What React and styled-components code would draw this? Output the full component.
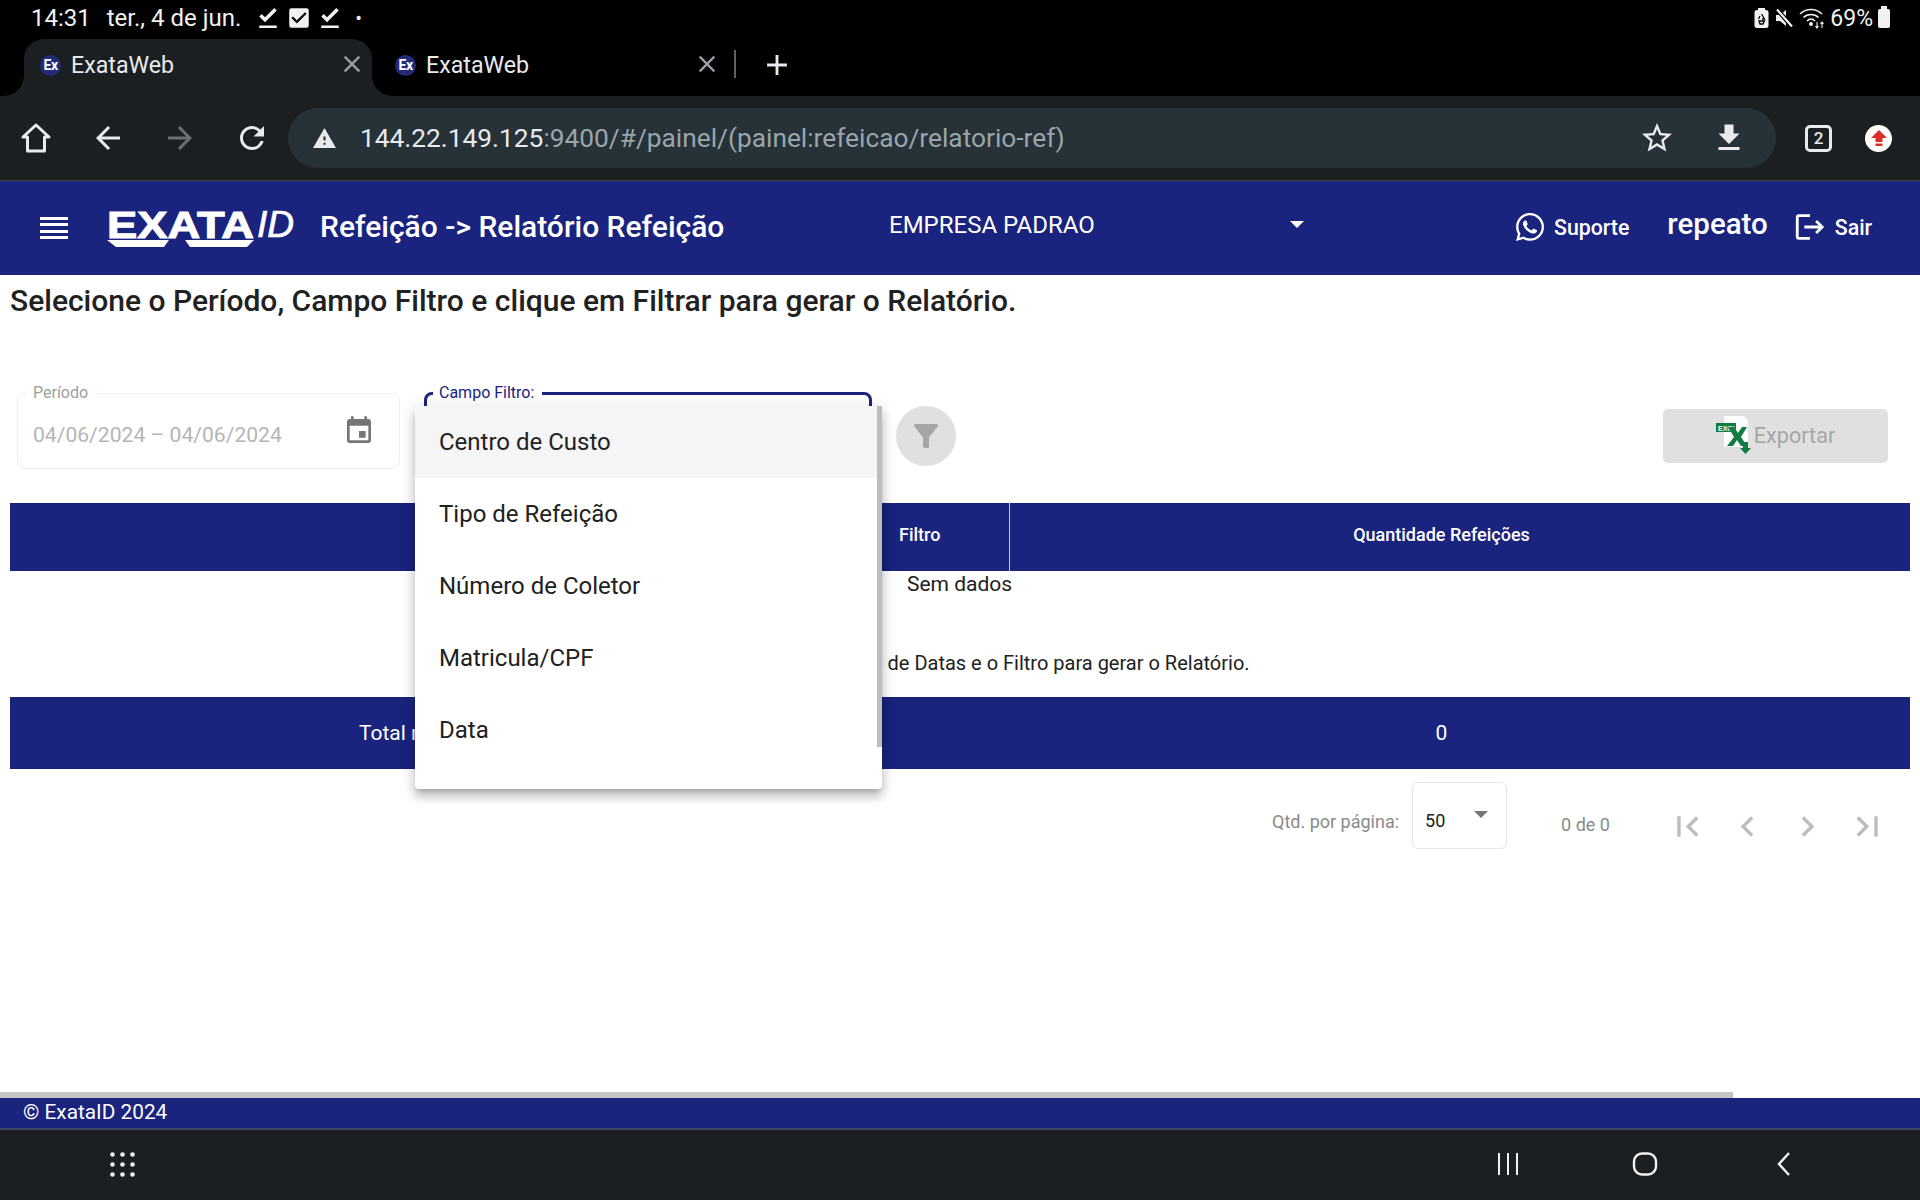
import styled, { createGlobalStyle } from 'styled-components'
import {
  MdFileDownloadDone, MdCheckBox, MdClose, MdAdd, MdArrowBack, MdArrowForward, MdRefresh,
  MdWarning, MdStarBorder, MdFileDownload, MdEvent, MdFilterAlt,
  MdFirstPage, MdChevronLeft, MdChevronRight, MdLastPage, MdLogout,
} from 'react-icons/md'
import { FaWhatsapp } from 'react-icons/fa'

const NAVY = '#1a237e'

const GlobalStyle = createGlobalStyle`
  html, body { margin: 0; padding: 0; background: #fff; overflow: hidden; }
  * { box-sizing: border-box; }
  body { font-family: Roboto, "Noto Sans", sans-serif; }
`

const Screen = styled.div`
  width: 1920px;
  height: 1200px;
  display: flex;
  flex-direction: column;
  overflow: hidden;
`

/* android status bar */
const StatusBar = styled.div`
  height: 39px;
  background: #000;
  color: #f1f1f1;
  display: flex;
  align-items: center;
  padding: 0 31px 3px;
  font-size: 24px;
`
const StatusDate = styled.span`
  margin-left: 16px;
  margin-right: 12px;
`
const CheckBoxGlyph = styled(MdCheckBox)`
  margin: 0 3px;
`
const StatusDot = styled.span`
  margin-left: 10px;
  font-size: 20px;
`
const StatusRight = styled.div`
  margin-left: auto;
  display: flex;
  align-items: center;
  gap: 5px;
  font-size: 23px;
  margin-right: -1px;
`
const BatteryBody = styled.span`
  display: inline-block;
  width: 12px;
  height: 19px;
  background: #f1f1f1;
  border-radius: 2px;
  position: relative;
  &::before {
    content: '';
    position: absolute;
    left: 3px;
    top: -3px;
    width: 6px;
    height: 3px;
    background: #f1f1f1;
  }
`

/* chrome tabs */
const TabStrip = styled.div`
  height: 57px;
  background: #000;
  display: flex;
  align-items: stretch;
  padding-left: 24px;
`
const Tab = styled.div`
  width: ${p => (p.$active ? '348px' : '355px')};
  margin-right: ${p => (p.$active ? '7px' : '0')};
  position: relative;
  display: flex;
  align-items: center;
  padding: 0 0 5px 16px;
  color: #e8eaed;
  font-size: 23.2px;
  background: ${p => (p.$active ? '#1b1f21' : 'transparent')};
  border-radius: ${p => (p.$active ? '20px 20px 0 0' : '0')};
  ${p => p.$active && `
    &::before, &::after {
      content: '';
      position: absolute;
      bottom: 0;
      width: 20px;
      height: 20px;
      background: radial-gradient(circle at var(--cx) 0, #000 19.5px, #1b1f21 20px);
    }
    &::before { left: -20px; --cx: 0; }
    &::after { right: -20px; --cx: 100%; }
  `}
`
const Favicon = styled.span`
  width: 21px;
  height: 21px;
  border-radius: 50%;
  background: #232a78;
  color: #fff;
  font-size: 14px;
  font-weight: 700;
  display: flex;
  align-items: center;
  justify-content: center;
  margin-right: 10px;
  letter-spacing: -0.5px;
`
const TabClose = styled(MdClose)`
  position: absolute;
  left: 314px;
  top: 11px;
  color: #9aa0a6;
  font-size: 28px;
`
const TabDivider = styled.span`
  width: 2px;
  height: 28px;
  background: #5f6368;
  align-self: center;
  margin-bottom: 7px;
`
const NewTab = styled(MdAdd)`
  color: #e8eaed;
  font-size: 34px;
  align-self: center;
  margin: 0 0 6px 24px;
`

/* chrome toolbar */
const Toolbar = styled.div`
  height: 85px;
  background: #1b1f21;
  display: flex;
  align-items: center;
  border-bottom: 1px solid #3c4a3c;
  color: #e8eaed;
`
const ToolSlot = styled.span`
  width: 72px;
  display: flex;
  align-items: center;
  justify-content: center;
  font-size: 36px;
  color: ${p => (p.$dim ? '#6b6f72' : '#e8eaed')};
`
const UrlPill = styled.div`
  width: 1488px;
  height: 60px;
  border-radius: 30px;
  background: #263238;
  display: flex;
  align-items: center;
  padding-left: 24px;
`
const UrlText = styled.span`
  font-size: 26.3px;
  color: #9aa5ab;
  margin-left: 23px;
  flex: 1;
  white-space: nowrap;
`
const UrlHost = styled.span`
  color: #e8eaed;
`
const PillIcon = styled.span`
  width: 72px;
  display: flex;
  justify-content: center;
  font-size: 36px;
  color: #e8eaed;
  margin-right: ${p => p.$right || 0}px;
`
const TabCounter = styled.span`
  width: 27px;
  height: 27px;
  border: 3px solid #e8eaed;
  border-radius: 5px;
  display: flex;
  align-items: center;
  justify-content: center;
  font-size: 17px;
  font-weight: 500;
  margin-left: 29px;
`
const UpdateBadge = styled.span`
  width: 27px;
  height: 27px;
  border-radius: 50%;
  background: #fff;
  display: flex;
  align-items: center;
  justify-content: center;
  margin-left: 33px;
`

/* app header */
const Header = styled.header`
  height: 94px;
  background: ${NAVY};
  color: #fff;
  display: flex;
  align-items: center;
  position: relative;
`
const Burger = styled.span`
  width: 28px;
  height: 23px;
  margin-left: 40px;
  display: flex;
  flex-direction: column;
  justify-content: space-between;
  span { height: 3px; background: #fff; display: block; }
`
const LogoMark = styled.svg`
  margin-left: 39px;
  flex-shrink: 0;
`
const Title = styled.h1`
  margin: 0 0 0 23px;
  padding-bottom: 3px;
  font-size: 30px;
  font-weight: 500;
  white-space: nowrap;
  width: 569px;
`
const CompanySelect = styled.div`
  width: 415px;
  display: flex;
  align-items: center;
  justify-content: space-between;
  font-size: 24px;
  padding-bottom: 7px;
`
const Caret = styled.span`
  width: 0;
  height: 0;
  border-left: ${p => p.$size}px solid transparent;
  border-right: ${p => p.$size}px solid transparent;
  border-top: ${p => p.$size}px solid ${p => p.$color};
`
const HeaderAction = styled.div`
  display: flex;
  align-items: center;
  font-size: 21.3px;
  font-weight: 500;
  gap: ${p => p.$gap}px;
  margin-left: ${p => p.$left}px;
  padding-bottom: 2px;
`
const UserName = styled.span`
  font-size: 29.5px;
  font-weight: 500;
  margin-left: 38px;
  padding-bottom: 8px;
`

/* page */
const Main = styled.main`
  flex: 1;
  background: #fff;
  padding: 0 10px;
  position: relative;
  min-height: 0;
`
const Lead = styled.h2`
  margin: 9px 0 0;
  font-size: 30px;
  line-height: 34px;
  font-weight: 500;
  color: #212121;
  white-space: nowrap;
`
const FilterRow = styled.div`
  display: flex;
  align-items: flex-start;
  margin-top: 66px;
  height: 119px;
  padding-left: 7px;
`
const Field = styled.fieldset`
  margin: 0;
  height: 85px;
  width: ${p => p.$width}px;
  border: ${p => (p.$focus ? `3px solid ${NAVY}` : '1px solid #eeeeee')};
  border-radius: 8px;
  padding: 0 15px 2px;
  display: flex;
  align-items: center;
  justify-content: space-between;
`
const FieldLegend = styled.legend`
  font-size: 16px;
  line-height: 18px;
  padding: 0 8px 0 6px;
  margin-left: ${p => p.$left}px;
  color: ${p => (p.$focus ? NAVY : '#9e9e9e')};
`
const DateText = styled.span`
  font-size: 21.1px;
  color: #b5b5b5;
  white-space: nowrap;
`
const CalendarIcon = styled(MdEvent)`
  font-size: 32px;
  color: #757575;
  margin: -6px 9px 0 0;
`
const SelectWrap = styled.div`
  position: relative;
  margin-left: 24px;
`
const Menu = styled.ul`
  position: absolute;
  left: -9px;
  top: 22px;
  width: 467px;
  height: 383px;
  margin: 0;
  padding: 0;
  list-style: none;
  background: #fff;
  border-radius: 4px;
  z-index: 5;
  box-shadow: 0 5px 5px -3px rgba(0,0,0,.2), 0 8px 10px 1px rgba(0,0,0,.14), 0 3px 14px 2px rgba(0,0,0,.12);
`
const MenuItem = styled.li`
  height: 72px;
  display: flex;
  align-items: center;
  padding-left: 24px;
  font-size: 24px;
  color: #212121;
  background: ${p => (p.$active ? '#f5f5f5' : 'transparent')};
`
const MenuThumb = styled.span`
  position: absolute;
  right: 0;
  top: 0;
  width: 5px;
  height: 341px;
  background: #bdbdbd;
`
const FilterButton = styled.span`
  width: 60px;
  height: 60px;
  border-radius: 50%;
  background: #e0e0e0;
  color: #a6a6a6;
  display: flex;
  align-items: center;
  justify-content: center;
  font-size: 36px;
  margin: 22px 0 0 24px;
`
const ExportButton = styled.span`
  width: 225px;
  height: 54px;
  background: #e0e0e0;
  color: #a6a6a6;
  border-radius: 5px;
  font-size: 21.6px;
  display: flex;
  align-items: center;
  justify-content: center;
  margin: 25px 22px 0 auto;
  padding-bottom: 2px;
`

const HeadRow = styled.div`
  height: 68px;
  background: ${NAVY};
  color: #fff;
  display: grid;
  grid-template-columns: 1000px 1fr;
  align-items: stretch;
  font-size: 18px;
  font-weight: 500;
`
const HeadFilter = styled.div`
  display: flex;
  align-items: center;
  padding: 0 0 6px 889px;
  border-right: 1px solid #c5cae9;
`
const HeadCount = styled.div`
  display: flex;
  align-items: center;
  justify-content: center;
  padding: 0 37px 6px 0;
`
const EmptyRow = styled.div`
  height: 127px;
  font-size: 21px;
  color: #212121;
`
const NoData = styled.div`
  padding-left: 897px;
  line-height: 28px;
  margin-top: -1px;
`
const Hint = styled.div`
  margin-top: 51px;
  padding-left: 696px;
  font-size: 20px;
  line-height: 28px;
  white-space: nowrap;
`
const TotalRow = styled.div`
  height: 72px;
  background: ${NAVY};
  color: #fff;
  display: grid;
  grid-template-columns: 1000px 1fr;
  align-items: center;
  font-size: 21px;
  padding-bottom: 1px;
`
const TotalLabel = styled.div`
  padding-left: 349px;
`
const TotalValue = styled.div`
  text-align: center;
  padding-right: 37px;
`
const Pager = styled.div`
  display: flex;
  align-items: center;
  height: 67px;
  margin-top: 13px;
  padding-left: 1262px;
  color: #8a8a8a;
  font-size: 18px;
`
const PagerLabel = styled.span`
  padding-top: 12px;
`
const PageSize = styled.div`
  width: 95px;
  height: 67px;
  margin-left: 13px;
  border: 1px solid #e3e5ee;
  border-radius: 6px;
  display: flex;
  align-items: center;
  justify-content: space-between;
  padding: 10px 18px 0 12px;
  color: #212121;
  span:last-child { margin-bottom: 12px; }
`
const PageCount = styled.span`
  margin: 0 48px 0 54px;
  padding-top: 18px;
  white-space: nowrap;
`
const PageIcon = styled.span`
  width: 60px;
  display: flex;
  justify-content: center;
  font-size: 41px;
  color: #bdbdbd;
  padding-top: 21px;
`

/* bottom */
const ScrollTrack = styled.div`
  height: 6px;
  background: #fff;
  flex-shrink: 0;
  span { display: block; width: 1733px; height: 6px; background: #c2c4c3; }
`
const Footer = styled.footer`
  height: 30px;
  background: ${NAVY};
  color: #fff;
  font-size: 20.8px;
  display: flex;
  align-items: center;
  padding: 0 0 2px 23px;
  flex-shrink: 0;
`
const NavBar = styled.div`
  height: 72px;
  background: #1b1f21;
  border-top: 2px solid #3f4767;
  display: flex;
  align-items: center;
  flex-shrink: 0;
  padding-bottom: 2px;
`
const NavApps = styled.span`
  margin-left: 110px;
  display: flex;
`
const NavKeys = styled.span`
  margin-left: auto;
  margin-right: 128px;
  display: flex;
  gap: 115px;
  align-items: center;
`
const HomeKey = styled.svg`
  margin: 0 3px 0 -3px;
`

const HomeIcon = () => (
  <svg width="30" height="32" viewBox="0 0 30 32" fill="none" stroke="currentColor" strokeWidth="3" strokeLinejoin="round">
    <path d="M15 3 L28 15 H23.5 V29 H6.5 V15 H2 Z" />
  </svg>
)

const Logo = () => (
  <LogoMark width="190" height="48" viewBox="0 0 190 48">
    <text x="0" y="33.5" fill="#fff" stroke="#fff" strokeWidth="1" fontFamily="Liberation Sans" fontWeight="700" fontSize="37" textLength="147" lengthAdjust="spacingAndGlyphs">EXATA</text>
    <text x="150" y="33" fill="#fff" stroke="#fff" strokeWidth="0.7" fontFamily="Liberation Sans" fontStyle="italic" fontSize="36" textLength="37" lengthAdjust="spacingAndGlyphs">ID</text>
    <polygon points="0,36 62,36 57,43 9,43" fill="#fff" />
    <polygon points="78,36 147,36 140,43 83,43" fill="#fff" />
  </LogoMark>
)

const ExcelIcon = () => (
  <svg width="38" height="38" viewBox="0 0 38 38">
    <polygon points="8,0 28,0 32,5 32,31 8,31" fill="#fff" />
    <rect x="0" y="7" width="20" height="9" fill="#107c41" />
    <text x="2" y="14.5" fontFamily="Liberation Sans" fontWeight="700" fontSize="7" fill="#fff">EXCL</text>
    <path d="M12 11 H18 L22 17 L26 11 H31 L25 21 L31 30 H25 L21 24 L17 30 H11 L18 21 Z" fill="#107c41" />
    <path d="M27 26 H32 V32 H35 L29.5 38 L24 32 H27 Z" fill="#107c41" />
  </svg>
)

const UpArrow = () => (
  <svg width="18" height="18" viewBox="0 0 18 18" fill="#d93025">
    <path d="M9 1 L17 9 H12.5 V13 H5.5 V9 H1 Z M5.5 14.5 H12.5 V17 H5.5 Z" />
  </svg>
)

const AppsDots = () => (
  <svg width="25" height="25" viewBox="0 0 25 25" fill="#f1f1f1">
    {[2.5, 12.5, 22.5].map(y => [2.5, 12.5, 22.5].map(x => <circle key={`${x}-${y}`} cx={x} cy={y} r="2.3" />))}
  </svg>
)

const RecentsIcon = () => (
  <svg width="24" height="24" viewBox="0 0 24 24" stroke="#f1f1f1" strokeWidth="2">
    <path d="M3 1 V23 M12 1 V23 M21 1 V23" />
  </svg>
)

const HomeKeyIcon = () => (
  <HomeKey width="26" height="24" viewBox="0 0 26 24" fill="none" stroke="#f1f1f1" strokeWidth="2.4">
    <rect x="2" y="1.5" width="22" height="21" rx="8" />
  </HomeKey>
)

const BackKeyIcon = () => (
  <svg width="16" height="26" viewBox="0 0 16 26" fill="none" stroke="#f1f1f1" strokeWidth="2.4">
    <path d="M13 2 L3 13 L13 24" />
  </svg>
)

const RecycleBattery = () => (
  <svg width="15" height="20" viewBox="0 0 15 20">
    <rect x="4" y="0" width="7" height="3" fill="#f1f1f1" />
    <rect x="0.5" y="2" width="14" height="18" rx="2.5" fill="#f1f1f1" />
    <path d="M7.5 6 L10.5 11 H8 M4.5 11 L6 8 M5 13 H10.5 L9 16 H6 Z" stroke="#000" strokeWidth="1.3" fill="none" />
  </svg>
)

const MuteIcon = () => (
  <svg width="20" height="20" viewBox="0 0 20 20">
    <path d="M2 7 H6 L12 2 V18 L6 13 H2 Z" fill="#f1f1f1" />
    <path d="M3 1.5 L18 18.5" stroke="#000" strokeWidth="4.5" />
    <path d="M3 1.5 L18 18.5" stroke="#f1f1f1" strokeWidth="2.2" />
  </svg>
)

const WifiIcon = () => (
  <svg width="26" height="22" viewBox="0 0 26 22" fill="none" stroke="#f1f1f1" strokeWidth="1.6">
    <path d="M1 7 C7 1 17 1 23 7" />
    <path d="M4.5 10.5 C8.5 6.5 15.5 6.5 19.5 10.5" />
    <path d="M8 14 C10.5 11.5 13.5 11.5 16 14" />
    <circle cx="12" cy="17" r="1.2" fill="#f1f1f1" />
    <path d="M18 21 V15 M16.5 19 L18 21 L19.5 19 M23 21 V15 M21.5 17 L23 15 L24.5 17" strokeWidth="1.1" />
  </svg>
)

const App = () => {
  const options = ['Centro de Custo', 'Tipo de Refeição', 'Número de Coletor', 'Matricula/CPF', 'Data']

  return (
    <Screen>
      <GlobalStyle />
      <StatusBar>
        <span>14:31</span>
        <StatusDate>ter., 4 de jun.</StatusDate>
        <MdFileDownloadDone size={30} />
        <CheckBoxGlyph size={26} />
        <MdFileDownloadDone size={30} />
        <StatusDot>•</StatusDot>
        <StatusRight>
          <RecycleBattery />
          <MuteIcon />
          <WifiIcon />
          <span>69%</span>
          <BatteryBody />
        </StatusRight>
      </StatusBar>

      <TabStrip>
        <Tab $active><Favicon>Ex</Favicon>ExataWeb<TabClose /></Tab>
        <Tab><Favicon>Ex</Favicon>ExataWeb<TabClose /></Tab>
        <TabDivider />
        <NewTab />
      </TabStrip>

      <Toolbar>
        <ToolSlot><HomeIcon /></ToolSlot>
        <ToolSlot><MdArrowBack /></ToolSlot>
        <ToolSlot $dim><MdArrowForward /></ToolSlot>
        <ToolSlot><MdRefresh /></ToolSlot>
        <UrlPill>
          <MdWarning size={25} color="#e8eaed" />
          <UrlText><UrlHost>144.22.149.125</UrlHost>:9400/#/painel/(painel:refeicao/relatorio-ref)</UrlText>
          <PillIcon><MdStarBorder /></PillIcon>
          <PillIcon $right={11}><MdFileDownload /></PillIcon>
        </UrlPill>
        <TabCounter>2</TabCounter>
        <UpdateBadge><UpArrow /></UpdateBadge>
      </Toolbar>

      <Header>
        <Burger><span /><span /><span /><span /></Burger>
        <Logo />
        <Title>Refeição -&gt; Relatório Refeição</Title>
        <CompanySelect>
          EMPRESA PADRAO
          <Caret $size={7} $color="#fff" />
        </CompanySelect>
        <HeaderAction $gap={8} $left={210}>
          <FaWhatsapp size={32} />
          Suporte
        </HeaderAction>
        <UserName>repeato</UserName>
        <HeaderAction $gap={8} $left={25}>
          <MdLogout size={34} />
          Sair
        </HeaderAction>
      </Header>

      <Main>
        <Lead>Selecione o Período, Campo Filtro e clique em Filtrar para gerar o Relatório.</Lead>
        <FilterRow>
          <Field $width={383}>
            <FieldLegend $left={-6}>Período</FieldLegend>
            <DateText>04/06/2024 – 04/06/2024</DateText>
            <CalendarIcon />
          </Field>
          <SelectWrap>
            <Field $width={448} $focus>
              <FieldLegend $left={-9} $focus>Campo Filtro:</FieldLegend>
            </Field>
            <Menu>
              {options.map((o, i) => <MenuItem key={o} $active={i === 0}>{o}</MenuItem>)}
              <MenuThumb />
            </Menu>
          </SelectWrap>
          <FilterButton><MdFilterAlt /></FilterButton>
          <ExportButton><ExcelIcon />Exportar</ExportButton>
        </FilterRow>

        <HeadRow>
          <HeadFilter>Filtro</HeadFilter>
          <HeadCount>Quantidade Refeições</HeadCount>
        </HeadRow>
        <EmptyRow>
          <NoData>Sem dados</NoData>
          <Hint>Selecione o Período de Datas e o Filtro para gerar o Relatório.</Hint>
        </EmptyRow>
        <TotalRow>
          <TotalLabel>Total no Período</TotalLabel>
          <TotalValue>0</TotalValue>
        </TotalRow>
        <Pager>
          <PagerLabel>Qtd. por página:</PagerLabel>
          <PageSize><span>50</span><Caret $size={7} $color="#757575" /></PageSize>
          <PageCount>0 de 0</PageCount>
          <PageIcon><MdFirstPage /></PageIcon>
          <PageIcon><MdChevronLeft /></PageIcon>
          <PageIcon><MdChevronRight /></PageIcon>
          <PageIcon><MdLastPage /></PageIcon>
        </Pager>
      </Main>

      <ScrollTrack><span /></ScrollTrack>
      <Footer>© ExataID 2024</Footer>
      <NavBar>
        <NavApps><AppsDots /></NavApps>
        <NavKeys>
          <RecentsIcon />
          <HomeKeyIcon />
          <BackKeyIcon />
        </NavKeys>
      </NavBar>
    </Screen>
  )
}

export default App
